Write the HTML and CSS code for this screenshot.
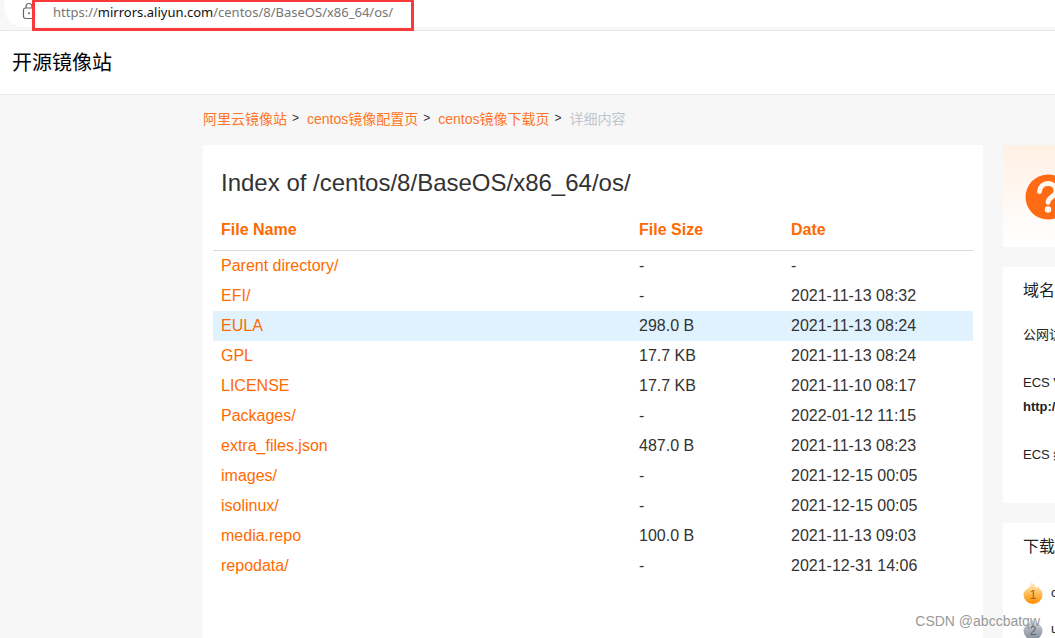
FILE: index.html
```html
<!DOCTYPE html>
<html lang="zh-CN">
<head>
<meta charset="utf-8">
<title>开源镜像站</title>
<link rel="stylesheet" href="styles.css">
</head>
<body>
<div class="toolbar">
  <div class="address">
    <svg class="lock" width="14" height="18" viewBox="0 0 14 18" fill="none" stroke="#666" stroke-width="1.2"><rect x="1.5" y="6" width="11" height="10.500" rx="2"/><path d="M4 6V4.500a3 3 0 0 1 6 0V6"/><circle cx="7" cy="11.300" r="1" fill="#666" stroke="none"/></svg>
    <div class="url">https://<span class="host">mirrors.aliyun.com</span>/centos/8/BaseOS/x86_64/os/</div>
  </div>
</div>
<header class="site-header"><div class="site-name">开源镜像站</div></header>
<div class="page">
  <nav class="crumbs">
    <a href="#">阿里云镜像站</a><span class="sep">&gt;</span><a href="#">centos镜像配置页</a><span class="sep">&gt;</span><a href="#">centos镜像下载页</a><span class="sep">&gt;</span><span class="current">详细内容</span>
  </nav>
  <div class="columns">
    <main class="listing">
      <h1>Index of /centos/8/BaseOS/x86_64/os/</h1>
      <table>
        <thead><tr><th class="name">File Name</th><th class="size">File Size</th><th>Date</th></tr></thead>
        <tbody>
          <tr><td><a href="#">Parent directory/</a></td><td>-</td><td>-</td></tr>
          <tr><td><a href="#">EFI/</a></td><td>-</td><td>2021-11-13 08:32</td></tr>
          <tr class="active"><td><a href="#">EULA</a></td><td>298.0 B</td><td>2021-11-13 08:24</td></tr>
          <tr><td><a href="#">GPL</a></td><td>17.7 KB</td><td>2021-11-13 08:24</td></tr>
          <tr><td><a href="#">LICENSE</a></td><td>17.7 KB</td><td>2021-11-10 08:17</td></tr>
          <tr><td><a href="#">Packages/</a></td><td>-</td><td>2022-01-12 11:15</td></tr>
          <tr><td><a href="#">extra_files.json</a></td><td>487.0 B</td><td>2021-11-13 08:23</td></tr>
          <tr><td><a href="#">images/</a></td><td>-</td><td>2021-12-15 00:05</td></tr>
          <tr><td><a href="#">isolinux/</a></td><td>-</td><td>2021-12-15 00:05</td></tr>
          <tr><td><a href="#">media.repo</a></td><td>100.0 B</td><td>2021-11-13 09:03</td></tr>
          <tr><td><a href="#">repodata/</a></td><td>-</td><td>2021-12-31 14:06</td></tr>
        </tbody>
      </table>
    </main>
    <aside class="side">
      <section class="help">
        <svg width="46" height="46" viewBox="0 0 46 46"><circle cx="23" cy="23" r="22.500" fill="#ff6a14"/><path d="M14.500 17.500C15 12.500 18.500 9.500 23 9.500s8 3 8 7.500c0 5.500-8 6-8 11.500" fill="none" stroke="#fff8f2" stroke-width="4.800" stroke-linecap="round"/><circle cx="23" cy="35.500" r="3.200" fill="#fff8f2"/></svg>
      </section>
      <section class="card">
        <h2>域名信息</h2>
        <p>公网访问</p>
        <p>ECS VPC<br><b>http://</b></p>
        <p>ECS 经典</p>
      </section>
      <section class="card">
        <h2>下载排行</h2>
        <ol class="rank">
          <li>
            <svg width="20" height="24" viewBox="0 0 20 24"><defs><linearGradient id="gold" x1="0" y1="0" x2="0" y2="1"><stop offset="0" stop-color="#fff0d0"/><stop offset=".5" stop-color="#ffc060"/><stop offset="1" stop-color="#ff8a00"/></linearGradient></defs><path d="M8 1c2.500 1.500 4.500 3.500 5 6L15.500 5c0 3 4 4 4 8.500a9.500 9.500 0 0 1-19 0C.500 8 8.500 7.500 8 1z" fill="url(#gold)"/><text x="10" y="18" class="gold">1</text></svg>
            <span>centos</span>
          </li>
          <li>
            <svg width="20" height="24" viewBox="0 0 20 24"><defs><linearGradient id="silver" x1="0" y1="0" x2="0" y2="1"><stop offset="0" stop-color="#e8ebef"/><stop offset=".5" stop-color="#aeb4be"/><stop offset="1" stop-color="#858e9c"/></linearGradient></defs><path d="M8 1c2.500 1.500 4.500 3.500 5 6L15.500 5c0 3 4 4 4 8.500a9.500 9.500 0 0 1-19 0C.500 8 8.500 7.500 8 1z" fill="url(#silver)"/><text x="10" y="18" class="silver">2</text></svg>
            <span>ubuntu</span>
          </li>
        </ol>
      </section>
    </aside>
  </div>
</div>
<div class="marker"></div>
<div class="watermark">CSDN @abccbatqw</div>
</body>
</html>
```
FILE: styles.css
```css
* { box-sizing: border-box; }
body {
  margin: 0;
  height: 100vh;
  overflow: hidden;
  display: flex;
  flex-direction: column;
  background: #f7f7f7;
  color: #333;
  font-family: "Liberation Sans", "Noto Sans CJK SC", sans-serif;
}
a { color: #ff6a00; text-decoration: none; }
.toolbar {
  flex: none;
  height: 31px;
  background: #f7f7f7;
  border-bottom: 1px solid #e8e8e8;
  overflow: hidden;
}
.address {
  height: 40px;
  margin-top: -13px;
  margin-left: 4px;
  padding: 12px 0 0 18px;
  display: flex;
  align-items: flex-start;
  gap: 17px;
  background: #fff;
  border-radius: 20px 0 0 20px;
}
.url {
  font: 13px/26px "Noto Sans", "Open Sans", sans-serif;
  color: #767676;
  white-space: nowrap;
}
.lock { margin-top: 3px; }
.host { color: #111; }
.site-header {
  flex: none;
  height: 64px;
  padding: 0 12px;
  display: flex;
  align-items: center;
  background: #fff;
  border-bottom: 1px solid #ebebeb;
}
.site-name { font-size: 20px; line-height: 28px; color: #000; }
.page {
  flex: 1;
  min-height: 0;
  padding-left: 203px;
  display: flex;
  flex-direction: column;
}
.crumbs {
  flex: none;
  height: 50px;
  padding-bottom: 4px;
  display: flex;
  align-items: center;
  font-size: 14px;
  white-space: nowrap;
}
.crumbs a { color: #ff7426; }
.sep { margin: 0 8px 0 5px; font-size: 12px; }
.crumbs .current { color: #c0c6cc; }
.columns { flex: 1; min-height: 0; display: flex; gap: 20px; }
.listing { flex: 0 0 780px; padding: 20px 10px; background: #fff; }
h1 { margin: 0 8px 10px; font-size: 24px; line-height: 36px; font-weight: 400; }
table { width: 100%; table-layout: fixed; border-collapse: collapse; font-size: 16px; line-height: 22px; }
th, td { padding: 4px 8px; text-align: left; }
th { height: 39px; color: #ff6a00; border-bottom: 1px solid #d8d8d8; }
.name { width: 55%; }
.size { width: 20%; }
.active { background: #e0f2fd; }
.side {
  flex: 1;
  min-width: 0;
  overflow: hidden;
  display: flex;
  flex-direction: column;
  gap: 20px;
  white-space: nowrap;
}
.help {
  flex: none;
  height: 102px;
  padding: 2px 0 0 22px;
  display: flex;
  align-items: center;
  background: linear-gradient(#fff0e4, #fff);
}
.help svg { flex: none; }
.card {
  flex: none;
  padding: 12px 0 36px 20px;
  background: #fff;
  color: #222;
  font-size: 13px;
  line-height: 24px;
}
h2 { margin: 0 0 20px; font-size: 16px; line-height: 24px; font-weight: 400; }
.card p { margin: 0 0 24px; }
.card p:last-child { margin: 0; }
.rank { margin: -4px 0 0; padding: 0; list-style: none; }
.rank li { height: 36px; display: flex; align-items: center; gap: 8px; }
.rank svg { flex: none; }
.rank text { font-size: 12px; text-anchor: middle; }
.gold { fill: #a85f10; }
.silver { fill: #596273; }
.marker {
  position: absolute;
  left: 32px;
  top: -1px;
  width: 382px;
  height: 32px;
  border: 3px solid #f93a3a;
}
.watermark {
  position: absolute;
  right: 15px;
  bottom: 8px;
  font-size: 14px;
  line-height: 18px;
  color: #999;
}
```
